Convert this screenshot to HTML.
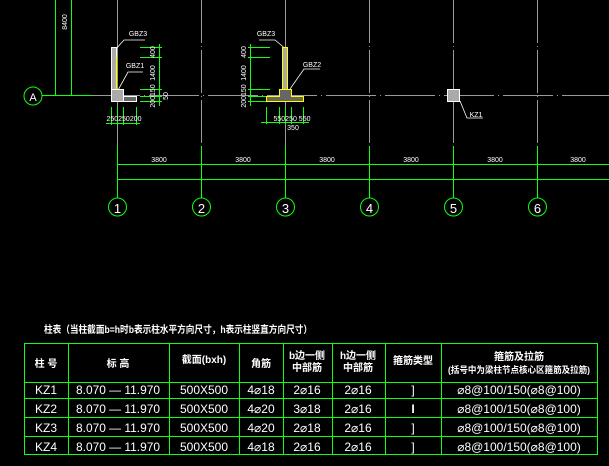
<!DOCTYPE html>
<html><head><meta charset="utf-8"><style>
html,body{margin:0;padding:0;background:#000;width:609px;height:466px;overflow:hidden}
svg{display:block}
text{font-family:"Liberation Sans","Noto Sans CJK SC",sans-serif;fill:#fff}
</style></head><body>
<svg width="609" height="466" viewBox="0 0 609 466" xmlns="http://www.w3.org/2000/svg">
<g stroke="#999" stroke-width="1">
<line x1="117.5" y1="0" x2="117.5" y2="146"/>
<line x1="201.5" y1="0" x2="201.5" y2="146" stroke-dasharray="43 3 1 3"/>
<line x1="285.5" y1="0" x2="285.5" y2="146"/>
<line x1="369.5" y1="0" x2="369.5" y2="146" stroke-dasharray="43 3 1 3"/>
<line x1="453.5" y1="0" x2="453.5" y2="146" stroke-dasharray="43 3 1 3"/>
<line x1="537.5" y1="0" x2="537.5" y2="146" stroke-dasharray="43 3 1 3"/>
<line x1="90" y1="95.5" x2="609" y2="95.5" stroke-dasharray="50 4 1 4"/>
</g>
<g stroke="#1f1" stroke-width="1" fill="none">
<line x1="55.5" y1="0" x2="55.5" y2="96"/>
<line x1="71.5" y1="0" x2="71.5" y2="96"/>
<line x1="42" y1="95.5" x2="92" y2="95.5"/>
<circle cx="33" cy="96" r="9"/>
<line x1="117.5" y1="146" x2="117.5" y2="198"/>
<line x1="201.5" y1="146" x2="201.5" y2="198"/>
<line x1="285.5" y1="146" x2="285.5" y2="198"/>
<line x1="369.5" y1="146" x2="369.5" y2="198"/>
<line x1="453.5" y1="146" x2="453.5" y2="198"/>
<line x1="537.5" y1="146" x2="537.5" y2="198"/>
<line x1="117" y1="164.5" x2="609" y2="164.5"/>
<line x1="117" y1="179.5" x2="609" y2="179.5"/>
<circle cx="117.5" cy="207" r="9"/><circle cx="201.5" cy="207" r="9"/><circle cx="285.5" cy="207" r="9"/>
<circle cx="369.5" cy="207" r="9"/><circle cx="453.5" cy="207" r="9"/><circle cx="537.5" cy="207" r="9"/>
<line x1="159.5" y1="44" x2="159.5" y2="106"/>
<line x1="140" y1="47.5" x2="162" y2="47.5"/><line x1="140" y1="57.5" x2="162" y2="57.5"/>
<line x1="140" y1="89.5" x2="162" y2="89.5"/><line x1="140" y1="96.5" x2="162" y2="96.5"/><line x1="140" y1="101.5" x2="162" y2="101.5"/>
<line x1="250.5" y1="44" x2="250.5" y2="106"/>
<line x1="248" y1="47.5" x2="270" y2="47.5"/><line x1="248" y1="57.5" x2="270" y2="57.5"/>
<line x1="248" y1="89.5" x2="270" y2="89.5"/><line x1="248" y1="96.5" x2="270" y2="96.5"/><line x1="248" y1="101.5" x2="270" y2="101.5"/>
<line x1="106" y1="123.5" x2="140" y2="123.5"/>
<line x1="111.5" y1="107" x2="111.5" y2="125"/><line x1="117.5" y1="107" x2="117.5" y2="125"/><line x1="123.5" y1="107" x2="123.5" y2="125"/><line x1="136.5" y1="107" x2="136.5" y2="125"/>
<line x1="261" y1="122.5" x2="309" y2="122.5"/>
<line x1="266.5" y1="107" x2="266.5" y2="124"/><line x1="279.5" y1="107" x2="279.5" y2="124"/><line x1="285.5" y1="107" x2="285.5" y2="124"/><line x1="291.5" y1="107" x2="291.5" y2="124"/><line x1="303.5" y1="107" x2="303.5" y2="124"/>
</g>
<g font-size="13" text-anchor="middle" fill="#fff">
<text x="33" y="101" font-size="11">A</text>
<text x="117.5" y="213">1</text><text x="201.5" y="213">2</text><text x="285.5" y="213">3</text>
<text x="369.5" y="213">4</text><text x="453.5" y="213">5</text><text x="537.5" y="213">6</text>
</g>
<g font-size="7" text-anchor="middle">
<text x="159" y="162">3800</text><text x="243" y="162">3800</text><text x="327" y="162">3800</text>
<text x="411" y="162">3800</text><text x="495" y="162">3800</text><text x="578" y="162">3800</text>
<text x="124" y="121">250250200</text><text x="292" y="121">550250 550</text><text x="293" y="130">350</text>
<text x="138" y="36">GBZ3</text><text x="266" y="36">GBZ3</text><text x="135" y="68">GBZ1</text><text x="312" y="67">GBZ2</text>
<text x="476" y="117">KZ1</text>
<text transform="translate(67,22) rotate(-90)">8400</text>
<text transform="translate(155,52) rotate(-90)">400</text><text transform="translate(155,73) rotate(-90)">1400</text>
<text transform="translate(155,96) rotate(-90)">200150</text><text transform="translate(168,96) rotate(-90)">50</text>
<text transform="translate(246,52) rotate(-90)">400</text><text transform="translate(246,73) rotate(-90)">1400</text>
<text transform="translate(246,96) rotate(-90)">200150</text>
</g>
<g stroke="#fff" stroke-width="0.8" fill="none">
<polyline points="115,50 124,40 145,40"/><polyline points="117,92 128,72 143,72"/>
<polyline points="287,50 275,40 259,40"/><polyline points="290,89 304,69 320,69"/>
<polyline points="460,101 467,118 483,118"/>
</g>
<rect x="111.5" y="47.5" width="5" height="42" fill="#aaa" stroke="#fff" stroke-width="1"/>
<line x1="116.5" y1="57" x2="116.5" y2="89" stroke="#ff0" stroke-width="1.2"/>
<rect x="111.5" y="89.5" width="12" height="12" fill="#aaa" stroke="#fff"/>
<rect x="123.5" y="96.5" width="13" height="5" fill="#666" stroke="#fff"/>
<rect x="282.5" y="47.5" width="5" height="42" fill="#aaa" stroke="#ff0"/>
<path d="M279.5 89.5 H291.5 V96.5 H303.5 V101.5 H266.5 V96.5 H279.5 Z" fill="#666" stroke="#ff0"/>
<rect x="447.5" y="89.5" width="12" height="12" fill="#aaa" stroke="#fff"/>
<text x="44" y="333" font-size="10" font-weight="bold" textLength="268" lengthAdjust="spacingAndGlyphs">柱表（当柱截面b=h时b表示柱水平方向尺寸，h表示柱竖直方向尺寸）</text>
<g stroke="#1f1" stroke-width="1" fill="none">
<rect x="24.5" y="343.5" width="573" height="111"/>
<line x1="24" y1="382.5" x2="598" y2="382.5"/><line x1="24" y1="398.5" x2="598" y2="398.5"/>
<line x1="24" y1="417.5" x2="598" y2="417.5"/><line x1="24" y1="436.5" x2="598" y2="436.5"/>
<line x1="68.5" y1="343" x2="68.5" y2="455"/><line x1="169.5" y1="343" x2="169.5" y2="455"/>
<line x1="239.5" y1="343" x2="239.5" y2="455"/><line x1="283.5" y1="343" x2="283.5" y2="455"/>
<line x1="332.5" y1="343" x2="332.5" y2="455"/><line x1="385.5" y1="343" x2="385.5" y2="455"/>
<line x1="441.5" y1="343" x2="441.5" y2="455"/>
</g>
<g font-size="10" text-anchor="middle" font-weight="bold">
<text x="46" y="367">柱 号</text><text x="118" y="367">标 高</text><text x="204" y="363">截面(bxh)</text>
<text x="261" y="367">角筋</text><text x="307" y="359">b边一侧</text><text x="307" y="371">中部筋</text>
<text x="358" y="359">h边一侧</text><text x="358" y="371">中部筋</text><text x="413" y="364">箍筋类型</text>
<text x="519" y="360">箍筋及拉筋</text><text x="519" y="373" font-size="9" textLength="142" lengthAdjust="spacingAndGlyphs">(括号中为梁柱节点核心区箍筋及拉筋)</text>
</g>
<g font-size="12" text-anchor="middle">
<text x="46" y="394">KZ1</text><text x="118" y="394" textLength="84" lengthAdjust="spacingAndGlyphs">8.070 — 11.970</text><text x="204" y="394">500X500</text><text x="261" y="394">4⌀18</text><text x="307" y="394">2⌀16</text><text x="358" y="394">2⌀16</text><text x="413" y="394">]</text><text x="519" y="394">⌀8@100/150(⌀8@100)</text>
<text x="46" y="413">KZ2</text><text x="118" y="413" textLength="84" lengthAdjust="spacingAndGlyphs">8.070 — 11.970</text><text x="204" y="413">500X500</text><text x="261" y="413">4⌀20</text><text x="307" y="413">3⌀18</text><text x="358" y="413">2⌀16</text><text x="413" y="413" font-weight="bold">I</text><text x="519" y="413">⌀8@100/150(⌀8@100)</text>
<text x="46" y="432">KZ3</text><text x="118" y="432" textLength="84" lengthAdjust="spacingAndGlyphs">8.070 — 11.970</text><text x="204" y="432">500X500</text><text x="261" y="432">4⌀20</text><text x="307" y="432">2⌀18</text><text x="358" y="432">2⌀16</text><text x="413" y="432">]</text><text x="519" y="432">⌀8@100/150(⌀8@100)</text>
<text x="46" y="451">KZ4</text><text x="118" y="451" textLength="84" lengthAdjust="spacingAndGlyphs">8.070 — 11.970</text><text x="204" y="451">500X500</text><text x="261" y="451">4⌀18</text><text x="307" y="451">2⌀16</text><text x="358" y="451">2⌀16</text><text x="413" y="451">]</text><text x="519" y="451">⌀8@100/150(⌀8@100)</text>
</g>
</svg>
</body></html>
